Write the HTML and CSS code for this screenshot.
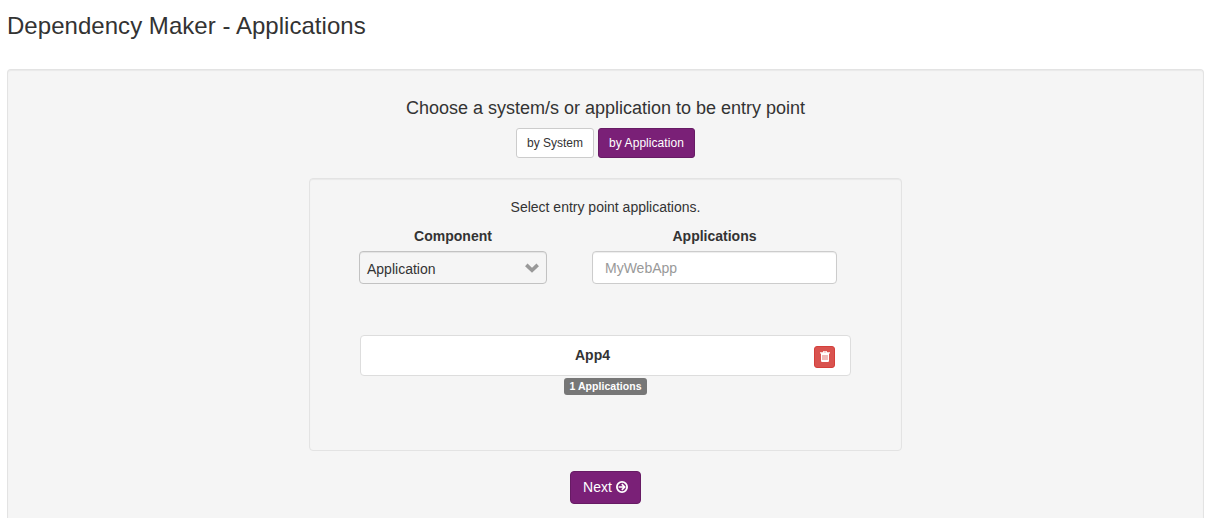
FILE: index.html
```html
<!DOCTYPE html>
<html lang="en">
<head>
<meta charset="utf-8">
<title>Dependency Maker</title>
<link rel="stylesheet" href="styles.css">
</head>
<body>
<h1 class="page-title">Dependency Maker - Applications</h1>
<main class="well outer">
  <h2 class="heading">Choose a system/s or application to be entry point</h2>
  <div class="toggle">
    <button class="btn btn-sm btn-default">by System</button>
    <button class="btn btn-sm btn-primary">by Application</button>
  </div>
  <section class="well inner">
    <p class="hint">Select entry point applications.</p>
    <div class="fields">
      <div class="field component">
        <span class="label">Component</span>
        <div class="control select"><span>Application</span>
          <svg class="chevron" width="14" height="10" viewBox="0 0 14 10"><path d="M1.300 1.900 7 7.300l5.700-5.400" fill="none" stroke="#999" stroke-width="3.600"/></svg>
        </div>
      </div>
      <div class="field apps">
        <label class="label" for="app">Applications</label>
        <input class="control input" id="app" type="text" placeholder="MyWebApp">
      </div>
    </div>
    <div class="item">
      <span class="item-name">App4</span>
      <button class="btn-delete" aria-label="Delete">
        <svg width="10" height="11" viewBox="0 0 10 11"><path fill="#fff" fill-rule="evenodd" d="M3.400 0h3.200l.6 1.300H10v1.100H9V9.700q0 1.300-1.100 1.300H2.100Q1 11 1 9.700V2.400H0V1.300h2.800zM4 .8l-.2.500h2.400L6 .8zM2.600 4v5h.8V4zm2 0v5h.8V4zm2 0v5h.8V4z"/></svg>
      </button>
    </div>
    <span class="badge">1 Applications</span>
  </section>
  <button class="btn btn-primary btn-next"><span>Next</span>
    <svg width="12" height="12" viewBox="0 0 12 12"><circle cx="6" cy="6" r="5.100" fill="none" stroke="#fff" stroke-width="1.800"/><path d="M2.600 6h6M5.800 3.100 8.700 6 5.800 8.900" fill="none" stroke="#fff" stroke-width="1.600"/></svg>
  </button>
</main>
</body>
</html>
```
FILE: styles.css
```css
* { box-sizing: border-box; }
body {
  margin: 0;
  padding: 12px 12px 0 7px;
  background: #fff;
  color: #333;
  font: 14px/20px "Liberation Sans", Arial, sans-serif;
}
button, input { font-family: inherit; }
.page-title { margin: 0 0 30px; font-size: 24px; line-height: 27px; font-weight: 400; letter-spacing: .04px; }
.well {
  display: flex;
  flex-direction: column;
  align-items: center;
  background: #f5f5f5;
  border: 1px solid #e3e3e3;
  border-radius: 4px;
  box-shadow: inset 0 1px 1px rgba(0, 0, 0, .05);
}
.outer { height: 449px; padding-top: 28px; border-bottom: 0; border-radius: 4px 4px 0 0; }
.heading { margin: 0 0 10px; font-size: 18px; line-height: 20px; font-weight: 400; }
.toggle { display: flex; gap: 4px; margin-bottom: 20px; }
.btn { border: 1px solid; border-radius: 4px; padding: 0; color: #333; }
.btn-sm { height: 30px; padding: 0 10px; font-size: 12px; line-height: 18px; border-radius: 3px; }
.btn-default { width: 78px; background: #fff; border-color: #ccc; }
.btn-primary { background: #7a2077; border-color: #671b64; color: #fff; }
.toggle .btn-primary { width: 97px; padding: 0 9px; letter-spacing: .05px; }
.inner { flex: none; width: 593px; height: 273px; padding-top: 18px; margin-bottom: 20px; }
.hint { margin: 0; }
.fields { display: flex; gap: 45px; align-self: flex-start; margin: 9px 0 51px 49px; }
.field { display: flex; flex-direction: column; align-items: center; }
.component { width: 188px; }
.apps { width: 245px; }
.label { font-weight: 700; margin-bottom: 5px; }
.control {
  width: 100%;
  height: 33px;
  border: 1px solid #c2c2c2;
  border-radius: 4px;
  font-size: 14px;
  box-shadow: inset 0 1px 1px rgba(0, 0, 0, .075);
}
.select { display: flex; align-items: center; justify-content: space-between; padding: 2px 7px 0; }
.chevron { margin-top: -1px; }
.input { padding: 0 12px; background: #fff; border-color: #ccc; }
.input::placeholder { color: #999; opacity: 1; }
.item {
  display: grid;
  grid-template-columns: 36px 1fr 36px;
  align-items: center;
  width: 491px;
  height: 41px;
  background: #fff;
  border: 1px solid #ddd;
  border-radius: 4px;
}
.item-name { grid-column: 2; margin: 0 26px 2px 0; text-align: center; font-weight: 700; }
.btn-delete {
  display: flex;
  align-items: center;
  justify-content: center;
  width: 21px;
  height: 22px;
  margin-top: 2px;
  padding: 0;
  background: #d9534f;
  border: 1px solid #d43f3a;
  border-radius: 3px;
}
.badge {
  margin-top: 2px;
  width: 83px;
  height: 17px;
  border-radius: 3px;
  background: #777;
  color: #fff;
  font-size: 10.5px;
  line-height: 17px;
  font-weight: 700;
  letter-spacing: .06px;
  text-align: center;
  white-space: nowrap;
}
.btn-next {
  display: flex;
  align-items: center;
  justify-content: center;
  gap: 4px;
  flex: none;
  width: 71px;
  height: 33px;
  font-size: 14px;
}
.btn-next span { padding-bottom: 2px; }
.btn-next svg { margin-bottom: 1px; }
```
